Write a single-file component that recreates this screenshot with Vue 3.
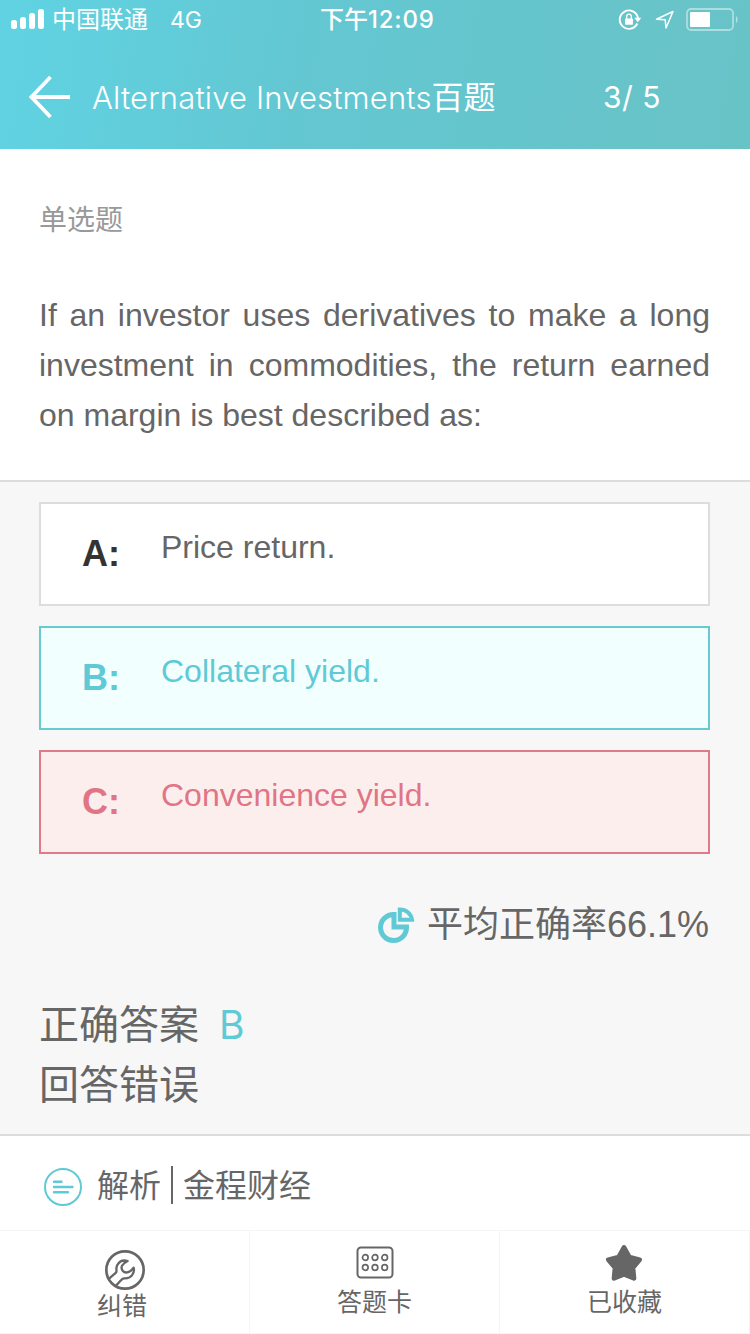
<script setup>
  import { ref } from 'vue'

  const question = ref({
    type: '单选题',
    title: 'If an investor uses derivatives to make a long investment in commodities, the return earned on margin is best described as:',
    answer: 'B',
    rate: '66.1%'
  })

  const selected = ref('C')

  const options = ref([
    { key: 'A', text: 'Price return.' },
    { key: 'B', text: 'Collateral yield.' },
    { key: 'C', text: 'Convenience yield.' }
  ])

  const optionClass = (key) => {
    if (key === question.value.answer) return 'right'
    if (key === selected.value) return 'wrong'
    return ''
  }
</script>

<template>
  <div class="page">
    <header class="header">
      <div class="status">
        <svg class="signal" width="34" height="22" viewBox="0 0 34 22" fill="#fff">
          <rect x="0" y="11" width="6" height="9" rx="2.500" />
          <rect x="9" y="8" width="6" height="12" rx="2.500" />
          <rect x="18" y="4" width="6" height="16" rx="2.500" />
          <rect x="27" y="0" width="6" height="20" rx="2.500" />
        </svg>
        <span class="carrier">中国联通</span>
        <span class="network">4G</span>
        <span class="time">下午<b>12:09</b></span>
        <svg class="lock" width="24" height="22" viewBox="0 0 24 22" fill="none" stroke="#fff" stroke-width="1.900">
          <path d="M19.300 14.500A9.200 9.200 0 1 1 20 9" />
          <path d="M16.300 8.800h7l-3.500 4.500z" fill="#fff" stroke="none" />
          <rect x="7" y="9.500" width="8" height="6.200" rx="0.800" fill="#fff" stroke="none" />
          <path d="M8.700 10V7.400a2.300 2.300 0 0 1 4.600 0V10" stroke-width="1.300" />
        </svg>
        <svg class="locate" width="20" height="20" viewBox="0 0 20 20" fill="none" stroke="#fff" stroke-width="1.500" stroke-linejoin="round">
          <path d="M1.500 9.200L18 1.500l-7 16.500-.8-8.300z" />
        </svg>
        <svg class="battery" width="54" height="24" viewBox="0 0 54 24">
          <rect x="1" y="1" width="46" height="21" rx="4" fill="none" stroke="#fff" stroke-opacity=".45" stroke-width="1.800" />
          <rect x="4" y="4" width="20" height="15" rx="1" fill="#fff" />
          <path d="M50 8a4.500 4.500 0 0 1 0 7z" fill="#fff" fill-opacity=".5" />
        </svg>
      </div>
      <nav class="nav">
        <svg class="back" width="42" height="44" viewBox="0 0 42 44" fill="none" stroke="#fff" stroke-width="3.800">
          <path d="M21.500 2L2.500 22l19 20M2 22h39" />
        </svg>
        <h1><span class="latin">Alternative Investments</span>百题</h1>
        <span class="page-num">3/ 5</span>
      </nav>
    </header>

    <section class="question">
      <p class="type">{{ question.type }}</p>
      <p class="title">{{ question.title }}</p>
    </section>

    <section class="answers">
      <ul>
        <li v-for="item in options" :key="item.key" :class="optionClass(item.key)">
          <b>{{ item.key }}:</b>
          <span>{{ item.text }}</span>
        </li>
      </ul>
      <div class="rate">
        <svg width="38" height="38" viewBox="0 0 38 38" fill="none" stroke="#5fcad6" stroke-width="5">
          <path d="M17 8.500A13 13 0 1 0 29.500 21H17z" />
          <path d="M22.800 3.500v10.200H35A12 12 0 0 0 22.800 3.500z" stroke-width="4" />
        </svg>
        <span>平均正确率<i>{{ question.rate }}</i></span>
      </div>
      <div class="result">
        <p>正确答案<em>{{ question.answer }}</em></p>
        <p>回答错误</p>
      </div>
    </section>

    <section class="analysis">
      <svg width="38" height="38" viewBox="0 0 38 38" fill="none" stroke="#5fcad6" stroke-linecap="round">
        <circle cx="19" cy="19" r="18" stroke-width="2" />
        <path d="M10 13.800h7.500M10 19h18.500M10 24.300h14" stroke-width="2.400" />
      </svg>
      <span>解析</span>
      <span class="line"></span>
      <span>金程财经</span>
    </section>

    <footer class="tabs">
      <div class="tab fix">
        <svg width="40" height="40" viewBox="0 0 120 120" fill="none" stroke="#666" stroke-width="7" stroke-linejoin="round">
          <circle cx="60" cy="60" r="56" stroke-width="8" />
          <path d="M13 85L33 68C37 62 31 54 37 45C43 34 55 29 68 33C52 41 45 51 53 62C62 73 77 66 86 53C90 70 78 87 57 85C50 85 48 92 33 107" />
        </svg>
        <span>纠错</span>
      </div>
      <div class="tab card">
        <svg width="38" height="33" viewBox="0 0 38 33" fill="none" stroke="#666" stroke-width="2">
          <rect x="1.500" y="1.500" width="35" height="30" rx="3.500" />
          <circle v-for="n in 6" :key="n" :cx="9.300 + (n - 1) % 3 * 9.700" :cy="n > 3 ? 21.500 : 11.500" r="2.800" stroke-width="1.700" />
        </svg>
        <span>答题卡</span>
      </div>
      <div class="tab star">
        <svg width="38" height="38" viewBox="0 0 114 114" fill="#666" stroke="#666" stroke-width="14" stroke-linejoin="round">
          <path d="M57 10L73 39L104 47L84 71L87 103L57 91L27 103L30 71L10 47L41 39z" />
        </svg>
        <span>已收藏</span>
      </div>
    </footer>
  </div>
</template>

<style>
body {
  margin: 0;
  background: #fff;
}
</style>

<style scoped>
.page {
  width: 750px;
  height: 1334px;
  overflow: hidden;
  background: #fff;
  color: #666;
  font-family: "Liberation Sans", "Noto Sans CJK SC", sans-serif;
}
p, h1, ul {
  margin: 0;
  padding: 0;
  font-weight: normal;
}
svg {
  display: block;
  flex: none;
}
span {
  white-space: nowrap;
}

/* header */
.header {
  height: 149px;
  color: #fff;
  background: linear-gradient(100deg, #60d3e3 0%, #63c7d2 40%, #68c3c6 100%);
  font-family: Inter, "Noto Sans CJK SC", sans-serif;
}
.status {
  display: flex;
  align-items: center;
  height: 40px;
  padding-left: 11px;
  font-size: 24px;
  line-height: 40px;
}
.carrier {
  width: 118px;
  padding-left: 7px;
}
.network {
  width: 150px;
  font-size: 23px;
}
.time {
  font-weight: 500;
}
.time b {
  font-weight: 500;
  font-size: 24px;
  letter-spacing: .8px;
}
.lock {
  margin-left: auto;
}
.locate {
  margin-left: 13px;
}
.battery {
  margin: 0 10px 0 11px;
}
.nav {
  display: flex;
  align-items: center;
  height: 114px;
  padding-left: 29px;
}
.nav h1 {
  width: 511px;
  padding: 0 0 4px 21px;
  font-size: 32px;
}
.latin {
  font-size: 31px;
  font-weight: 350;
  letter-spacing: .15px;
}
.page-num {
  padding-bottom: 1px;
  font-size: 30px;
  letter-spacing: .5px;
}

/* question */
.question {
  height: 291px;
  padding: 40px 40px 0 39px;
}
.type {
  height: 99px;
  padding-top: 2px;
  font-size: 28px;
  line-height: 60px;
  color: #999;
}
.title {
  font-size: 32px;
  line-height: 50px;
  text-align: justify;
}

/* answers */
.answers {
  box-sizing: border-box;
  height: 656px;
  padding: 20px 40px 0 39px;
  border-top: 2px solid #ddd;
  border-bottom: 2px solid #ddd;
  background: #f7f7f7;
}
.answers ul {
  display: grid;
  gap: 20px;
  list-style: none;
}
.answers li {
  display: flex;
  box-sizing: border-box;
  height: 104px;
  padding-left: 41px;
  border: 2px solid #ddd;
  background: #fff;
  font-size: 32px;
}
.answers li b {
  width: 79px;
  font-size: 36px;
  line-height: 100px;
  color: #333;
}
.answers li span {
  line-height: 86px;
}
.answers li.right {
  border-color: #68c9cf;
  background: #f2ffff;
  color: #5fcad6;
}
.answers li.wrong {
  border-color: #dd7b8a;
  background: #fdeeee;
  color: #e07585;
}
.answers li.right b,
.answers li.wrong b {
  color: inherit;
}
.rate {
  display: flex;
  justify-content: flex-end;
  align-items: center;
  gap: 12px;
  height: 141px;
  padding-right: 1px;
  font-size: 36px;
}
.rate span {
  padding-bottom: 7px;
}
.rate i {
  font-style: normal;
}
.result {
  font-size: 40px;
  line-height: 60px;
}
.result em {
  margin-left: 20px;
  font-style: normal;
  font-family: Inter, sans-serif;
  font-size: 39px;
  color: #5fcad6;
}

/* analysis */
.analysis {
  display: flex;
  align-items: center;
  height: 94px;
  padding: 0 44px;
  font-size: 32px;
}
.analysis svg {
  margin: 8px 15px 0 0;
}
.analysis .line {
  width: 2px;
  height: 38px;
  margin: 4px 10px 0;
  background: #666;
}

/* tabs */
.tabs {
  display: flex;
  height: 104px;
}
.tab {
  display: flex;
  flex-direction: column;
  align-items: center;
  box-sizing: border-box;
  width: 250px;
  border: 1px solid #f5f5f5;
  border-left: none;
  font-size: 25px;
  line-height: 36px;
}
.fix svg {
  margin: 19px 0 -2px;
}
.fix span {
  padding-right: 5px;
}
.card svg {
  margin: 15px 0 5px;
}
.star svg {
  margin: 13px 2px 2px 0;
}
</style>
